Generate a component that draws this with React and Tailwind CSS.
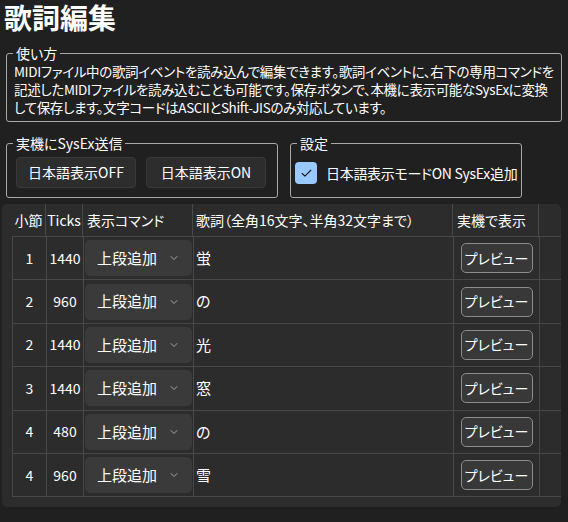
import { Check, ChevronDown } from 'lucide-react'

const rows = [
  { bar: 1, ticks: 1440, lyric: '蛍' },
  { bar: 2, ticks: 960, lyric: 'の' },
  { bar: 2, ticks: 1440, lyric: '光' },
  { bar: 3, ticks: 1440, lyric: '窓' },
  { bar: 4, ticks: 480, lyric: 'の' },
  { bar: 4, ticks: 960, lyric: '雪' },
]

const grid = 'grid grid-cols-[34px_37px_110px_260px_86px_7px]'

function Group({ title, className = '', children }) {
  return (
    <fieldset className={`rounded-[3px] border-[1.5px] border-[#a8a8a8] ${className}`}>
      <legend className="ml-[6px] px-[3px] text-[14px] leading-[18px]">{title}</legend>
      {children}
    </fieldset>
  )
}

export default function App() {
  return (
    <div className="h-[522px] w-[568px] overflow-hidden bg-[#202020] font-['Noto_Sans_CJK_JP',sans-serif] text-white [font-feature-settings:'palt']">
      {/* Title */}
      <h1 className="h-[34px] pl-[4px] text-[28px] font-bold leading-[34px]">歌詞編集</h1>

      {/* How to */}
      <Group title="使い方" className="mx-[6px] mt-[10px] h-[78px] w-[550px]">
        <p className="whitespace-nowrap px-[7px] text-[13.5px] leading-[18px] tracking-[-0.35px]">
          MIDIファイル中の歌詞イベントを読み込んで編集できます。歌詞イベントに、右下の専用コマンドを
          <br />
          記述したMIDIファイルを読み込むことも可能です。保存ボタンで、本機に表示可能なSysExに変換
          <br />
          して保存します。文字コードはASCIIとShift-JISのみ対応しています。
        </p>
      </Group>

      {/* SysEx + settings */}
      <div className="mt-[12px] flex gap-[12px] px-[6px]">
        <Group title="実機にSysEx送信" className="h-[64px] w-[272px]">
          <div className="flex gap-[10px] px-[9px] pt-[5px]">
            <button className="h-[31px] w-[120px] rounded-[4px] border border-[#393939] bg-[#2d2d2d] text-[14px]">
              日本語表示OFF
            </button>
            <button className="h-[31px] w-[120px] rounded-[4px] border border-[#393939] bg-[#2d2d2d] text-[14px]">
              日本語表示ON
            </button>
          </div>
        </Group>
        <Group title="設定" className="h-[64px] w-[226px]">
          <label className="flex items-center gap-[9px] whitespace-nowrap px-[4px] pt-[10px] text-[14px] tracking-[-0.3px]">
            <span className="flex h-[22px] w-[22px] shrink-0 items-center justify-center rounded-[4px] bg-[#99c9ff]">
              <Check size={13} strokeWidth={2} className="text-[#1a1a1a]" />
            </span>
            日本語表示モードON SysEx追加
          </label>
        </Group>
      </div>

      {/* Lyrics table */}
      <div className="mx-[2px] mt-[6px] h-[303px] w-[559px] rounded-[5px] bg-[#2c2c2c] pl-[10px]">
        <div className={`${grid} h-[33px] border-b border-[#484848] text-[14px]`}>
          <div className="flex items-center justify-center border-r border-[#484848]">小節</div>
          <div className="flex items-center justify-center border-r border-[#484848]">Ticks</div>
          <div className="flex items-center border-r border-[#484848] pl-[4px]">表示コマンド</div>
          <div className="flex items-center border-r border-[#484848] pl-[3px]">歌詞（全角16文字、半角32文字まで）</div>
          <div className="flex items-center border-r border-[#484848] pl-[4px]">実機で表示</div>
          <div />
        </div>
        {rows.map((r, i) => (
          <div key={i} className={`${grid} h-[43.4px] border-b border-l border-[#484848] text-[14px]`}>
            <div className="flex items-center justify-center border-r border-[#484848]">{r.bar}</div>
            <div className="flex items-center justify-center border-r border-[#484848]">{r.ticks}</div>
            <div className="flex items-center border-r border-[#484848] pl-[1px] pr-[1px]">
              <div className="flex h-[36px] w-full items-center justify-between rounded-[5px] bg-[#3a3a3a] pl-[12px] pr-[12px]">
                <span className="text-[15px]">上段追加</span>
                <ChevronDown size={12} strokeWidth={1.5} className="text-[#c8c8c8]" />
              </div>
            </div>
            <div className="flex items-center border-r border-[#484848] pl-[2px] text-[15px]">{r.lyric}</div>
            <div className="flex items-center justify-center border-r border-[#484848]">
              <button className="h-[30px] w-[72px] rounded-[5px] border border-[#8c8c8c] bg-[#383838] text-[14px]">
                プレビュー
              </button>
            </div>
            <div />
          </div>
        ))}
      </div>
    </div>
  )
}
